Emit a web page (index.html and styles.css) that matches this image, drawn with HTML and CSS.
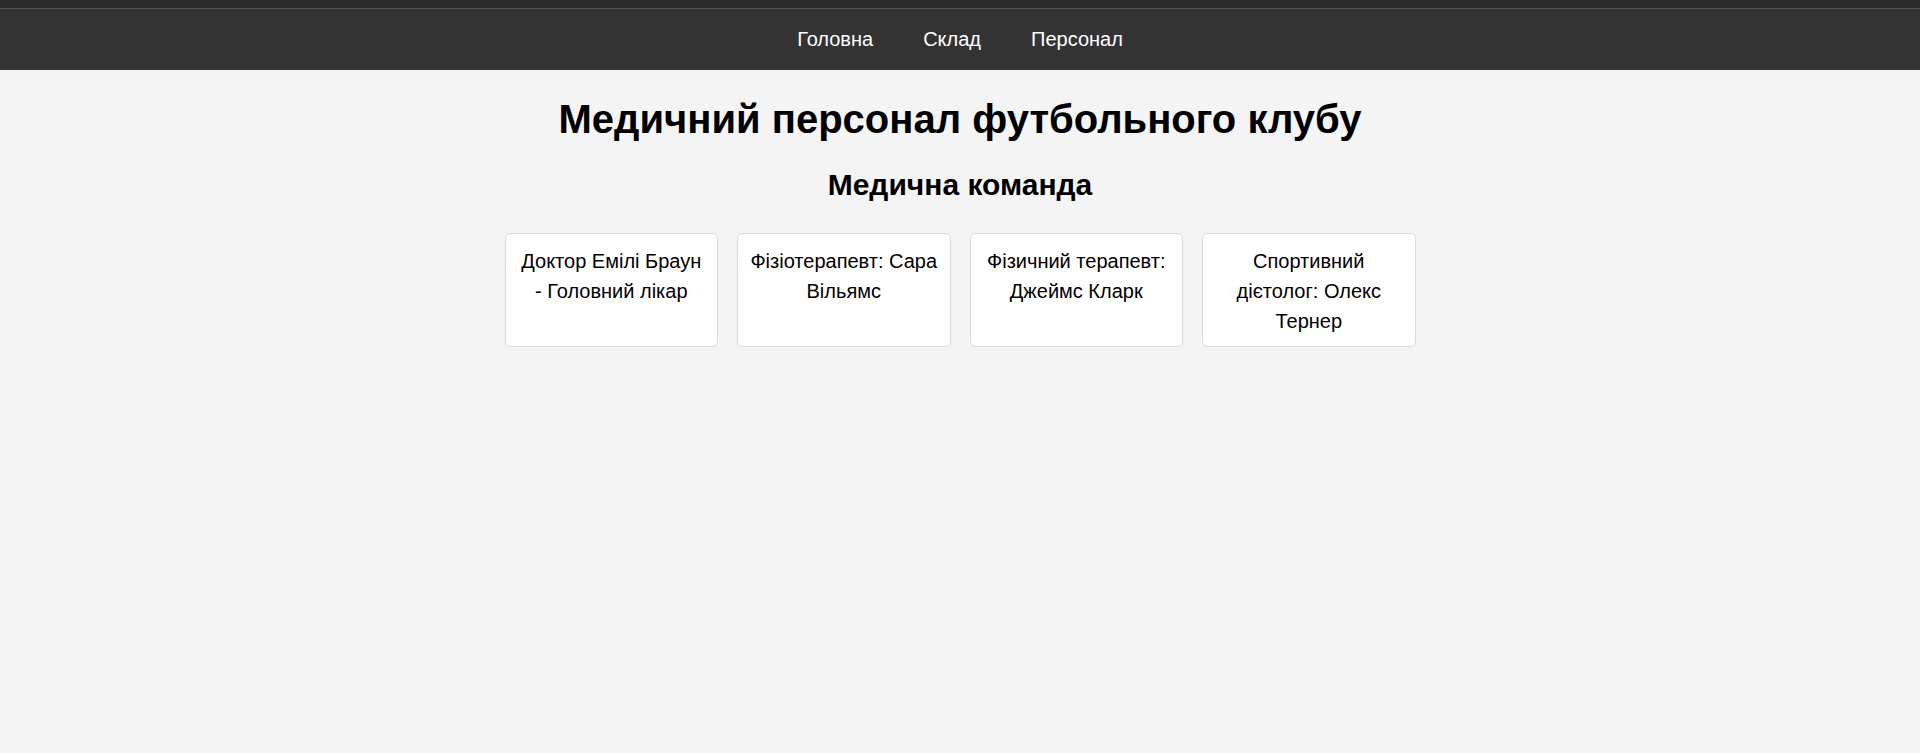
FILE: index.html
```html
<!DOCTYPE html>
<html lang="uk">
<head>
<meta charset="utf-8">
<title>Медичний персонал</title>
<link rel="stylesheet" href="styles.css">
</head>
<body>
<header class="site-header">
  <div class="top-strip"></div>
  <nav class="main-nav">
    <a href="#" class="nav-link">Головна</a>
    <a href="#" class="nav-link">Склад</a>
    <a href="#" class="nav-link">Персонал</a>
  </nav>
</header>
<main class="content">
  <h1 class="page-title">Медичний персонал футбольного клубу</h1>
  <h2 class="section-title">Медична команда</h2>
  <div class="cards">
    <div class="card">Доктор Емілі Браун - Головний лікар</div>
    <div class="card">Фізіотерапевт: Сара Вільямс</div>
    <div class="card">Фізичний терапевт: Джеймс Кларк</div>
    <div class="card">Спортивний дієтолог: Олекс Тернер</div>
  </div>
</main>
</body>
</html>
```
FILE: styles.css
```css
html, body {
  margin: 0;
  padding: 0;
}
body {
  background: #f4f4f4;
  font-family: "Liberation Sans", Arial, sans-serif;
  font-size: 20px;
  color: #000;
}
.top-strip {
  height: 8px;
  background: #2a2a2a;
  border-bottom: 1px solid #555;
}
.main-nav {
  background: #333;
  display: flex;
  justify-content: center;
  gap: 50px;
  padding: 19px 0;
  line-height: 23px;
}
.nav-link {
  color: #fff;
  text-decoration: none;
  font-size: 20px;
}
.content {
  display: flex;
  flex-direction: column;
  align-items: center;
}
.page-title {
  font-size: 40px;
  font-weight: bold;
  margin: 26px 0 0;
  line-height: 46px;
}
.section-title {
  font-size: 30px;
  font-weight: bold;
  margin: 26px 0 0;
  line-height: 34px;
}
.cards {
  display: flex;
  width: 911px;
  gap: 19px;
  margin-top: 31px;
}
.card {
  flex: 1;
  box-sizing: border-box;
  background: #fff;
  border: 1px solid #dcdcdc;
  border-radius: 5px;
  padding: 12px 11px 10px;
  text-align: center;
  line-height: 30px;
  color: #000;
}
```
